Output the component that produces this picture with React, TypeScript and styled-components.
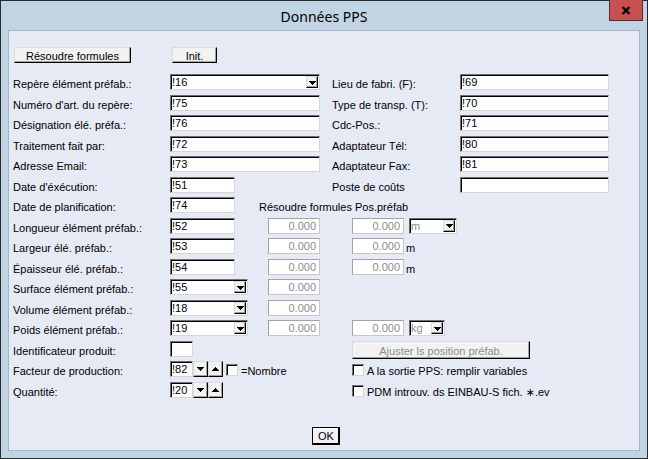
import styled, { createGlobalStyle, css } from "styled-components";

const GlobalStyle = createGlobalStyle`
  html, body {
    margin: 0;
    padding: 0;
  }
  body {
    font-family: "Liberation Sans", Arial, "DejaVu Sans", sans-serif;
    font-size: 11px;
    color: #000;
  }
  *, *::before, *::after {
    box-sizing: border-box;
  }
`;

const raised = css`
  background: #f2f2f2;
  border: 1px solid;
  border-color: #dadada #000 #000 #dadada;
  box-shadow: inset -1px -1px 0 #a0a0a0;
`;

const sunken = css`
  background: #fff;
  border: 1px solid;
  border-color: #707070 #d6d6d6 #d6d6d6 #707070;
  box-shadow: inset 1px 1px 0 #000;
`;

const Window = styled.div`
  width: 648px;
  height: 459px;
  border: 1px solid #2b2b2b;
  background: #c0d4e4;
  display: flex;
  flex-direction: column;
`;

const TitleBar = styled.div`
  height: 29px;
  display: grid;
  grid-template-columns: 1fr auto 1fr;
  align-items: center;
`;

const Title = styled.div`
  grid-column: 2;
  font-family: "Noto Sans", "Open Sans", sans-serif;
  font-size: 14px;
  color: #000;
  padding-top: 2px;
`;

const CloseButton = styled.div`
  grid-column: 3;
  justify-self: end;
  align-self: start;
  width: 34px;
  height: 21px;
  margin: -1px 4px 0 0;
  background: #c75050;
  border: 1px solid #5c2a2a;
  border-top: none;
  display: flex;
  align-items: center;
  justify-content: center;
`;

const Client = styled.div`
  flex: 1;
  margin: 0 7px 7px 7px;
  border: 1px solid #a3b6ca;
  background: #e6eaf5;
  padding: 16px 0 0 4px;
  display: flex;
  flex-direction: column;
`;

const Toolbar = styled.div`
  display: grid;
  grid-template-columns: 157px 150px;
  height: 16px;
  margin-bottom: 11px;
`;

const PushButton = styled.div<{ $w: number; $h?: number; $ml?: number; $dim?: boolean }>`
  ${raised};
  width: ${(p) => p.$w}px;
  height: ${(p) => p.$h ?? 16}px;
  margin-left: ${(p) => p.$ml ?? 0}px;
  color: ${(p) => (p.$dim ? "#8c8c8c" : "#000")};
  text-align: center;
  line-height: ${(p) => (p.$h ?? 16) - 2}px;
  padding-top: 1px;
  white-space: nowrap;
`;

const Form = styled.div`
  display: flex;
  flex-direction: column;
`;

const Row = styled.div`
  display: grid;
  grid-template-columns: 157px 150px 12px 128px 149px;
  height: 20.5px;
  align-items: start;
`;

const Label = styled.div<{ $col?: number }>`
  grid-column: ${(p) => p.$col ?? 1};
  padding-top: 3px;
  line-height: 14px;
  white-space: nowrap;
`;

const Cell = styled.div<{ $col: string; $pad?: number; $spread?: boolean }>`
  grid-column: ${(p) => p.$col};
  display: flex;
  align-items: flex-start;
  justify-content: ${(p) => (p.$spread ? "space-between" : "flex-start")};
  padding-left: ${(p) => p.$pad ?? 0}px;
`;

const Field = styled.div<{ $w?: number }>`
  ${sunken};
  width: ${(p) => (p.$w ? `${p.$w}px` : "100%")};
  height: 16px;
  padding-left: 1px;
  line-height: 14px;
  white-space: nowrap;
  overflow: hidden;
`;

const Readout = styled.div`
  width: 52px;
  height: 16px;
  background: #fff;
  border: 1px solid;
  border-color: #a2a2a2 #c8c8c8 #c8c8c8 #a2a2a2;
  color: #8c8c8c;
  text-align: right;
  padding-right: 3px;
  line-height: 14px;
`;

const ComboFrame = styled.div<{ $w?: number; $ml?: number }>`
  ${sunken};
  width: ${(p) => (p.$w ? `${p.$w}px` : "100%")};
  height: 16px;
  margin-left: ${(p) => p.$ml ?? 0}px;
  display: flex;
  align-items: flex-start;
`;

const ComboText = styled.span<{ $dim?: boolean }>`
  flex: 1;
  padding-left: 1px;
  line-height: 14px;
  color: ${(p) => (p.$dim ? "#8c8c8c" : "#000")};
  white-space: nowrap;
  overflow: hidden;
`;

const DropButton = styled.span`
  ${raised};
  width: 12px;
  height: 12px;
  margin: 1px 1px 0 0;
  display: flex;
  align-items: center;
  justify-content: center;
  padding-top: 1px;
`;

const SpinButton = styled.span`
  ${raised};
  width: 15px;
  height: 16px;
  display: flex;
  align-items: center;
  justify-content: center;
`;

const CheckBox = styled.span<{ $ml?: number }>`
  ${sunken};
  width: 12px;
  height: 12px;
  margin: 3px 0 0 ${(p) => p.$ml ?? 0}px;
  flex: none;
`;

const InlineText = styled.span<{ $ml?: number }>`
  margin-left: ${(p) => p.$ml ?? 0}px;
  padding-top: 3px;
  line-height: 14px;
  white-space: nowrap;
`;

const Footer = styled.div`
  display: flex;
  justify-content: center;
  margin-top: 25px;
`;

const OkButton = styled.div`
  width: 28px;
  height: 18px;
  background: #f2f2f2;
  border: 1px solid #000;
  box-shadow: inset -1px -1px 0 #000, inset 1px 1px 0 #fff;
  text-align: center;
  line-height: 16px;
`;

const Arrow = ({ up }: { up?: boolean }) => (
  <svg width="7" height="4" viewBox="0 0 7 4" shapeRendering="crispEdges">
    <path
      d={
        up
          ? "M3 0h1v1H3zM2 1h3v1H2zM1 2h5v1H1zM0 3h7v1H0z"
          : "M0 0h7v1H0zM1 1h5v1H1zM2 2h3v1H2zM3 3h1v1H3z"
      }
      fill="#000"
    />
  </svg>
);

const CloseGlyph = () => (
  <svg width="10" height="9" viewBox="0 0 10 9">
    <path d="M1.5 1 L8.5 8 M8.5 1 L1.5 8" stroke="#000" strokeWidth="2.3" />
  </svg>
);

const ComboBox = ({ value, w, ml, dim }: { value: string; w?: number; ml?: number; dim?: boolean }) => (
  <ComboFrame $w={w} $ml={ml}>
    <ComboText $dim={dim}>{value}</ComboText>
    <DropButton>
      <Arrow />
    </DropButton>
  </ComboFrame>
);

const Spinner = ({ value }: { value: string }) => (
  <>
    <Field $w={23}>{value}</Field>
    <SpinButton>
      <Arrow />
    </SpinButton>
    <SpinButton>
      <Arrow up />
    </SpinButton>
  </>
);

export default function App() {
  return (
    <>
      <GlobalStyle />
      <Window>
        <TitleBar>
          <Title>Données PPS</Title>
          <CloseButton>
            <CloseGlyph />
          </CloseButton>
        </TitleBar>
        <Client>
          <Toolbar>
            <PushButton $w={117} $ml={1}>Résoudre formules</PushButton>
            <PushButton $w={45} $ml={2}>Init.</PushButton>
          </Toolbar>

          <Form>
            <Row>
              <Label>Repère élément préfab.:</Label>
              <Cell $col="2">
                <ComboBox value="!16" />
              </Cell>
              <Label $col={4}>Lieu de fabri. (F):</Label>
              <Cell $col="5">
                <Field>!69</Field>
              </Cell>
            </Row>
            <Row>
              <Label>Numéro d'art. du repère:</Label>
              <Cell $col="2">
                <Field>!75</Field>
              </Cell>
              <Label $col={4}>Type de transp. (T):</Label>
              <Cell $col="5">
                <Field>!70</Field>
              </Cell>
            </Row>
            <Row>
              <Label>Désignation élé. préfa.:</Label>
              <Cell $col="2">
                <Field>!76</Field>
              </Cell>
              <Label $col={4}>Cdc-Pos.:</Label>
              <Cell $col="5">
                <Field>!71</Field>
              </Cell>
            </Row>
            <Row>
              <Label>Traitement fait par:</Label>
              <Cell $col="2">
                <Field>!72</Field>
              </Cell>
              <Label $col={4}>Adaptateur Tél:</Label>
              <Cell $col="5">
                <Field>!80</Field>
              </Cell>
            </Row>
            <Row>
              <Label>Adresse Email:</Label>
              <Cell $col="2">
                <Field>!73</Field>
              </Cell>
              <Label $col={4}>Adaptateur Fax:</Label>
              <Cell $col="5">
                <Field>!81</Field>
              </Cell>
            </Row>
            <Row>
              <Label>Date d'éxécution:</Label>
              <Cell $col="2">
                <Field $w={65}>!51</Field>
              </Cell>
              <Label $col={4}>Poste de coûts</Label>
              <Cell $col="5">
                <Field />
              </Cell>
            </Row>
            <Row>
              <Label>Date de planification:</Label>
              <Cell $col="2 / span 3">
                <Field $w={65}>!74</Field>
                <InlineText $ml={24}>Résoudre formules Pos.préfab</InlineText>
              </Cell>
            </Row>
            <Row>
              <Label>Longueur élément préfab.:</Label>
              <Cell $col="2" $spread>
                <Field $w={65}>!52</Field>
                <Readout>0.000</Readout>
              </Cell>
              <Cell $col="4 / span 2" $pad={20}>
                <Readout>0.000</Readout>
                <ComboBox value="m" w={48} ml={5} dim />
              </Cell>
            </Row>
            <Row>
              <Label>Largeur élé. préfab.:</Label>
              <Cell $col="2" $spread>
                <Field $w={65}>!53</Field>
                <Readout>0.000</Readout>
              </Cell>
              <Cell $col="4 / span 2" $pad={20}>
                <Readout>0.000</Readout>
                <InlineText $ml={2}>m</InlineText>
              </Cell>
            </Row>
            <Row>
              <Label>Épaisseur élé. préfab.:</Label>
              <Cell $col="2" $spread>
                <Field $w={65}>!54</Field>
                <Readout>0.000</Readout>
              </Cell>
              <Cell $col="4 / span 2" $pad={20}>
                <Readout>0.000</Readout>
                <InlineText $ml={2}>m</InlineText>
              </Cell>
            </Row>
            <Row>
              <Label>Surface élément préfab.:</Label>
              <Cell $col="2" $spread>
                <ComboBox value="!55" w={78} />
                <Readout>0.000</Readout>
              </Cell>
            </Row>
            <Row>
              <Label>Volume élément préfab.:</Label>
              <Cell $col="2" $spread>
                <ComboBox value="!18" w={78} />
                <Readout>0.000</Readout>
              </Cell>
            </Row>
            <Row>
              <Label>Poids élément préfab.:</Label>
              <Cell $col="2" $spread>
                <ComboBox value="!19" w={78} />
                <Readout>0.000</Readout>
              </Cell>
              <Cell $col="4 / span 2" $pad={20}>
                <Readout>0.000</Readout>
                <ComboBox value="kg" w={36} ml={5} dim />
              </Cell>
            </Row>
            <Row>
              <Label>Identificateur produit:</Label>
              <Cell $col="2">
                <Field $w={23} />
              </Cell>
              <Cell $col="4 / span 2" $pad={20}>
                <PushButton $w={178} $h={18} $dim>
                  Ajuster ls position préfab.
                </PushButton>
              </Cell>
            </Row>
            <Row>
              <Label>Facteur de production:</Label>
              <Cell $col="2">
                <Spinner value="!82" />
                <CheckBox $ml={3} />
                <InlineText $ml={3}>=Nombre</InlineText>
              </Cell>
              <Cell $col="4 / span 2" $pad={20}>
                <CheckBox />
                <InlineText $ml={3}>A la sortie PPS: remplir variables</InlineText>
              </Cell>
            </Row>
            <Row>
              <Label>Quantité:</Label>
              <Cell $col="2">
                <Spinner value="!20" />
              </Cell>
              <Cell $col="4 / span 2" $pad={20}>
                <CheckBox />
                <InlineText $ml={3}>PDM introuv. ds EINBAU-S fich. ∗.ev</InlineText>
              </Cell>
            </Row>
          </Form>

          <Footer>
            <OkButton>OK</OkButton>
          </Footer>
        </Client>
      </Window>
    </>
  );
}
